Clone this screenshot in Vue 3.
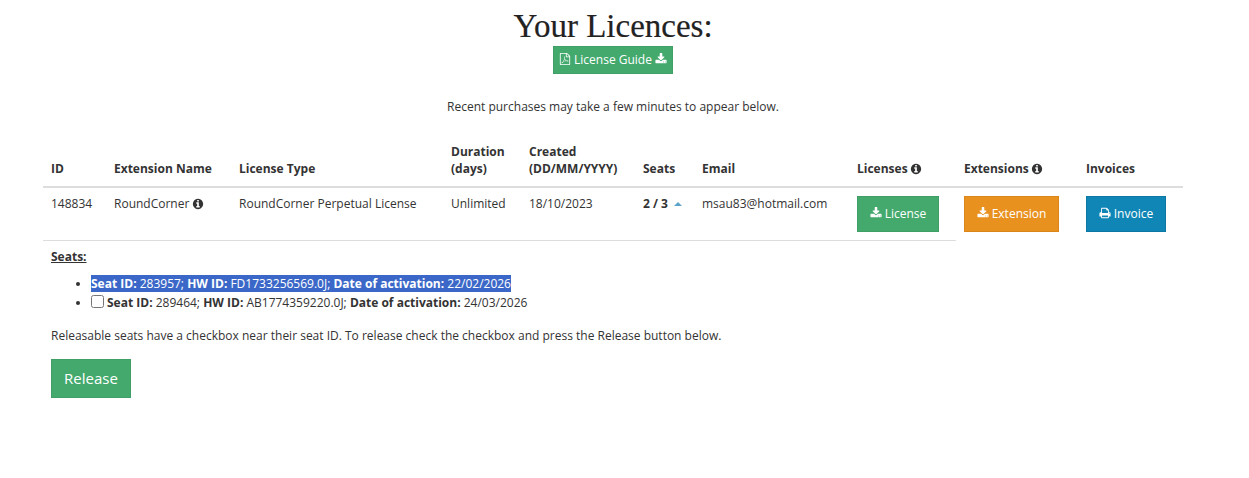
<script setup>
const downloadPath = 'M1344 1344q0-26-19-45t-45-19-45 19-19 45 19 45 45 19 45-19 19-45zm256 0q0-26-19-45t-45-19-45 19-19 45 19 45 45 19 45-19 19-45zm128-224v320q0 40-28 68t-68 28h-1472q-40 0-68-28t-28-68v-320q0-40 28-68t68-28h465l135 136q58 56 136 56t136-56l136-136h464q40 0 68 28t28 68zm-325-569q17 41-14 70l-448 448q-18 19-45 19t-45-19l-448-448q-31-29-14-70 17-39 59-39h256v-448q0-26 19-45t45-19h256q26 0 45 19t19 45v448h256q42 0 59 39z'
const infoPath = 'M1152 1376v-160q0-14-9-23t-23-9h-96v-512q0-14-9-23t-23-9h-320q-14 0-23 9t-9 23v160q0 14 9 23t23 9h96v320h-96q-14 0-23 9t-9 23v160q0 14 9 23t23 9h448q14 0 23-9t9-23zm-128-896v-160q0-14-9-23t-23-9h-192q-14 0-23 9t-9 23v160q0 14 9 23t23 9h192q14 0 23-9t9-23zm640 416q0 209-103 385.5t-279.5 279.5-385.5 103-385.5-103-279.5-279.5-103-385.5 103-385.5 279.5-279.5 385.5-103 385.5 103 279.5 279.5 103 385.5z'
const printPath = 'M448 1536h896v-256h-896v256zm0-640h896v-384h-160q-40 0-68-28t-28-68v-160h-640v640zm1152 64q0-26-19-45t-45-19-45 19-19 45 19 45 45 19 45-19 19-45zm128 0v416q0 13-9.5 22.5t-22.5 9.5h-224v160q0 40-28 68t-68 28h-960q-40 0-68-28t-28-68v-160h-224q-13 0-22.5-9.5t-9.5-22.5v-416q0-79 56.5-135.5t135.5-56.5h64v-544q0-40 28-68t68-28h672q40 0 88 20t76 48l152 152q28 28 48 76t20 88v256h64q79 0 135.5 56.5t56.5 135.5z'
const pdfPath = 'M1596 380q28 28 48 76t20 88v1152q0 40-28 68t-68 28h-1344q-40 0-68-28t-28-68v-1600q0-40 28-68t68-28h896q40 0 88 20t76 48zm-444-244v376h376q-10-29-22-41l-313-313q-12-12-41-22zm384 1528v-1024h-416q-40 0-68-28t-28-68v-416h-768v1536h1280zm-514-593q33 26 84 56 59-7 117-7 147 0 177 49 16 22 2 52 0 1-1 2l-2 2v1q-6 38-71 38-48 0-115-20t-130-53q-221 24-392 83-153 262-242 262-15 0-28-7l-24-12q-1-1-6-5-10-10-6-36 9-40 56-91.5t132-96.5q14-9 23 6 2 2 2 4 52-85 107-197 68-136 104-262-24-82-30.5-159.5t6.5-127.5q11-40 42-40h22q23 0 35 15 18 21 9 68-2 6-4 8 1 3 1 8v30q-2 123-14 192 55 164 146 238zm-576 411q52-24 137-158-51 40-87.5 84t-49.5 74zm398-920q-15 42-2 132 1-7 7-44 0-3 7-43 1-4 4-8-1-1-1-2-1-2-1-3-1-22-13-36 0 1-1 2v2zm-124 661q135-54 284-81-2-1-13-9.5t-16-13.5q-76-67-127-176-27 86-83 197-30 56-45 83zm646-16q-24-24-140-24 76 28 124 28 14 0 18-1 0-1-2-3z'

const columns = [63, 125, 212, 78, 114, 59, 155, 107, 122, 105]
</script>

<template>
  <div class="page">
    <h1 class="title">Your Licences:</h1>
    <div class="guide-row">
      <a class="btn btn-green guide-btn">
        <svg class="icon" viewBox="0 0 1792 1792"><path :d="pdfPath" /></svg>
        License Guide
        <svg class="icon" viewBox="0 0 1792 1792"><path :d="downloadPath" /></svg>
      </a>
    </div>
    <p class="notice">Recent purchases may take a few minutes to appear below.</p>

    <table class="licences">
      <colgroup>
        <col v-for="(w, i) in columns" :key="i" :style="{ width: w + 'px' }" />
      </colgroup>
      <thead>
        <tr>
          <th>ID</th>
          <th>Extension Name</th>
          <th>License Type</th>
          <th>Duration<br />(days)</th>
          <th>Created<br />(DD/MM/YYYY)</th>
          <th>Seats</th>
          <th>Email</th>
          <th>Licenses <svg class="icon info" viewBox="0 0 1792 1792"><path :d="infoPath" /></svg></th>
          <th>Extensions <svg class="icon info" viewBox="0 0 1792 1792"><path :d="infoPath" /></svg></th>
          <th>Invoices</th>
        </tr>
      </thead>
      <tbody>
        <tr>
          <td>148834</td>
          <td>RoundCorner <svg class="icon info" viewBox="0 0 1792 1792"><path :d="infoPath" /></svg></td>
          <td>RoundCorner Perpetual License</td>
          <td>Unlimited</td>
          <td>18/10/2023</td>
          <td><b class="seat-count">2 / 3</b><span class="caret"></span></td>
          <td>msau83@hotmail.com</td>
          <td>
            <a class="btn btn-green row-btn">
              <svg class="icon" viewBox="0 0 1792 1792"><path :d="downloadPath" /></svg>
              License
            </a>
          </td>
          <td class="no-line">
            <a class="btn btn-orange row-btn">
              <svg class="icon" viewBox="0 0 1792 1792"><path :d="downloadPath" /></svg>
              Extension
            </a>
          </td>
          <td class="no-line">
            <a class="btn btn-blue row-btn">
              <svg class="icon" viewBox="0 0 1792 1792"><path :d="printPath" /></svg>
              Invoice
            </a>
          </td>
        </tr>
      </tbody>
    </table>

    <div class="seats">
      <h4 class="seats-title">Seats:</h4>
      <ul class="seat-list">
        <li>
          <span class="selected"><b>Seat ID:</b> 283957; <b>HW ID:</b> FD1733256569.0J; <b>Date of activation:</b> 22/02/2026</span>
        </li>
        <li>
          <input type="checkbox" class="seat-check" />
          <b>Seat ID:</b> 289464; <b>HW ID:</b> AB1774359220.0J; <b>Date of activation:</b> 24/03/2026
        </li>
      </ul>
      <p class="hint">Releasable seats have a checkbox near their seat ID. To release check the checkbox and press the Release button below.</p>
      <button class="btn btn-green release-btn">Release</button>
    </div>
  </div>
</template>

<style>
body {
  background: #fff;
}
</style>

<style scoped>
.page {
  width: 1140px;
  margin-left: 43px;
  font-family: "Open Sans", "Liberation Sans", sans-serif;
  font-size: 12px;
  line-height: 17px;
  color: #333;
}

.title {
  margin: 0;
  padding-top: 6px;
  height: 40px;
  font-family: "Liberation Serif", serif;
  font-size: 33px;
  line-height: 40px;
  font-weight: 400;
  text-align: center;
  color: #222;
  -webkit-text-stroke: 0.2px #222;
}

.guide-row {
  text-align: center;
}

.btn {
  display: inline-flex;
  align-items: center;
  justify-content: center;
  gap: 3px;
  box-sizing: border-box;
  padding: 0 0 2px;
  color: #fff;
  border: 1px solid transparent;
  font-family: inherit;
}

.btn-green {
  background: #43a96d;
  border-color: #3f9f67;
}

.btn-orange {
  background: #e8911f;
  border-color: #d9861a;
}

.btn-blue {
  background: #0f86b5;
  border-color: #0c78a3;
}

.guide-btn {
  width: 120px;
  height: 28px;
}

.icon {
  width: 12px;
  height: 12px;
  fill: currentColor;
  vertical-align: -2px;
}

.icon.info {
  margin-left: -1px;
}

.notice {
  margin: 24px 0 21px;
  text-align: center;
}

.licences {
  width: 1140px;
  table-layout: fixed;
  border-collapse: collapse;
}

.licences th {
  padding: 7px 8px 9px;
  text-align: left;
  vertical-align: bottom;
  font-weight: 700;
  border-bottom: 2px solid #ddd;
}

.licences td {
  padding: 7px 8px 8px;
  vertical-align: top;
  border-bottom: 1px solid #ddd;
}

.licences td.no-line {
  border-bottom: none;
}

.seat-count {
  color: #333;
}

.caret {
  display: inline-block;
  margin-left: 6px;
  vertical-align: 2px;
  border-left: 4px solid transparent;
  border-right: 4px solid transparent;
  border-bottom: 4px solid #5ba3c9;
}

.row-btn {
  height: 36px;
  width: 82px;
  margin-top: 1px;
}

.btn-orange.row-btn {
  width: 95px;
}

.btn-blue.row-btn {
  width: 80px;
}

.seats {
  padding-left: 8px;
}

.seats-title {
  margin: 7px 0 0;
  font-size: 12px;
  font-weight: 700;
  text-decoration: underline;
}

.seat-list {
  margin: 10px 0 0;
  padding-left: 40px;
}

.seat-list li {
  height: 18px;
  line-height: 18px;
}

.seat-list li:first-child {
  height: 19px;
}

.selected {
  background: #3b68c8;
  color: #fff;
}

.seat-check {
  width: 13px;
  height: 13px;
  margin: 0 3px 0 0;
  vertical-align: -1px;
}

.hint {
  margin: 15px 0 15px;
}

.release-btn {
  width: 80px;
  height: 39px;
  font-size: 15px;
}
</style>
